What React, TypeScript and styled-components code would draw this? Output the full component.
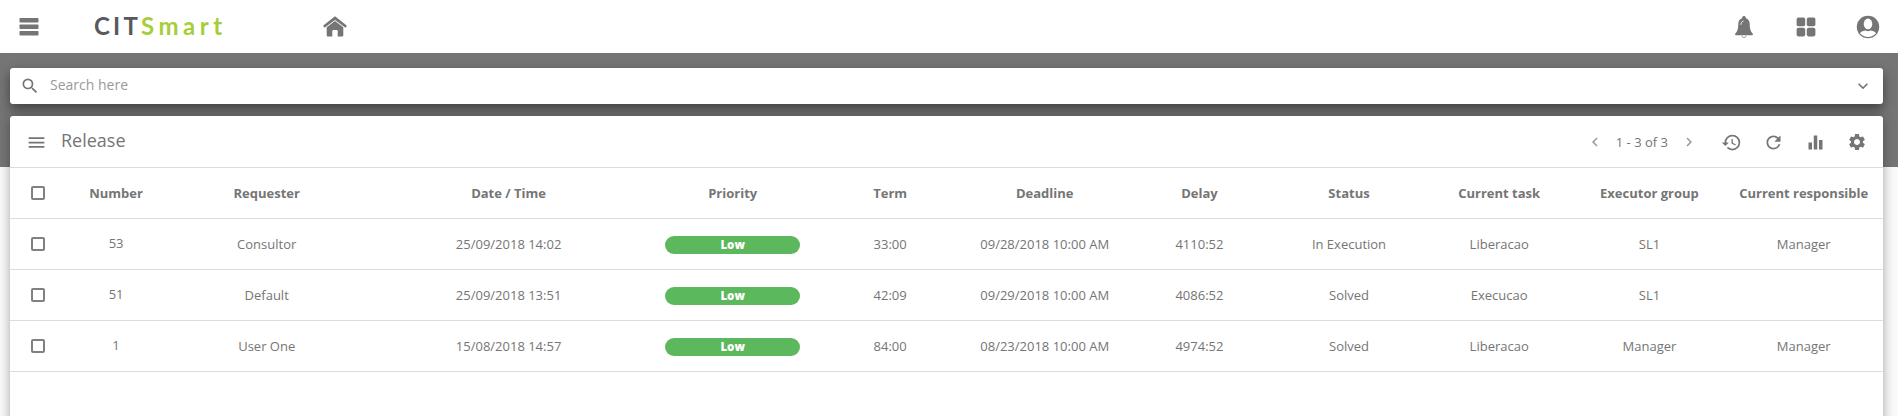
import React from "react";
import styled, { createGlobalStyle } from "styled-components";
import {
  MdChevronLeft,
  MdChevronRight,
  MdEqualizer,
  MdExpandMore,
  MdHistory,
  MdMenu,
  MdRefresh,
  MdSearch,
  MdSettings,
} from "react-icons/md";

const GlobalStyle = createGlobalStyle`
  * { box-sizing: border-box; }
  body {
    margin: 0;
    background: #fafafa;
    color: #757575;
    font-family: "Open Sans", "Noto Sans", sans-serif;
    font-size: 13px;
  }
  svg { display: block; flex: none; }
`;

const Page = styled.div`
  height: 416px;
  overflow: hidden;
  background: linear-gradient(#757575 167px, #fafafa 167px);
`;

const TopBar = styled.header`
  display: flex;
  align-items: center;
  height: 53px;
  padding: 0 18px 0 19px;
  background: #fff;
`;

const Logo = styled.div`
  width: 229px;
  margin-left: 55px;
  padding-bottom: 1px;
  color: #58595b;
  font-family: Lato, sans-serif;
  font-size: 24px;
  font-weight: 700;
  line-height: 30px;
  letter-spacing: 3.2px;
  white-space: nowrap;
`;

const LogoAccent = styled.span`
  color: #a6ce39;
  letter-spacing: 4.5px;
`;

const TopActions = styled.div`
  display: flex;
  align-items: center;
  gap: 38px;
  margin-left: auto;
`;

const TopAction = styled.div`
  display: flex;
  justify-content: center;
  width: 24px;
`;

const SearchBar = styled.div`
  display: flex;
  align-items: center;
  height: 36px;
  margin: 15px 15px 12px 10px;
  padding: 0 10px;
  border-radius: 3px;
  background: #fff;
  box-shadow: 0 5px 12px rgba(0, 0, 0, 0.45);
`;

const SearchText = styled.span`
  flex: 1;
  margin-left: 10px;
  padding-bottom: 3px;
  color: #999;
  font-size: 14px;
`;

const Panel = styled.main`
  height: 340px;
  margin: 0 15px 0 10px;
  border-radius: 3px 3px 0 0;
  background: #fff;
  box-shadow: 0 2px 12px rgba(0, 0, 0, 0.35);
`;

const Toolbar = styled.div`
  display: flex;
  align-items: center;
  height: 52px;
  padding: 1px 16px 0;
  border-bottom: 1px solid #dcdcdc;
`;

const Title = styled.h1`
  flex: 1;
  margin: 0 0 4px 14px;
  font-size: 18px;
  font-weight: 400;
`;

const Pager = styled.div`
  display: flex;
  align-items: center;
  gap: 12px;
  margin-right: 23px;
`;

const PageCount = styled.span`
  padding-bottom: 1px;
`;

const ToolIcons = styled.div`
  display: flex;
  align-items: center;
  gap: 21px;
`;

const Row = styled.div`
  display: grid;
  grid-template-columns:
    56.4px 99.4px 201.8px 282px 166.2px 148.8px 160.3px 149.2px
    149.9px 150.5px 150px 158.5px;
  align-items: center;
  height: 51px;
  border-bottom: 1px solid #dcdcdc;
`;

const Cell = styled.div<{ $raised?: boolean }>`
  padding-bottom: ${(p) => (p.$raised ? "2px" : "0")};
  line-height: 18px;
  text-align: center;
  white-space: nowrap;
`;

const HeadCell = styled(Cell)`
  font-weight: 700;
`;

const Checkbox = styled.div`
  width: 14px;
  height: 14px;
  margin-left: 21px;
  border: 2px solid #808080;
  border-radius: 2px;
`;

const Badge = styled.span`
  display: block;
  width: 135px;
  height: 18px;
  margin: 2px auto 0;
  border-radius: 9px;
  background: #5cb85c;
  color: #fff;
  font-size: 11.5px;
  font-weight: 800;
  line-height: 18px;
`;

const BarsIcon = () => (
  <svg width="20" height="18" viewBox="0 0 20 18" fill="#757575">
    <rect x="0.5" y="0" width="19" height="4.6" rx="0.8" />
    <rect x="0.5" y="6.5" width="19" height="4.6" rx="0.8" />
    <rect x="0.5" y="13" width="19" height="4.6" rx="0.8" />
  </svg>
);

const HomeIcon = () => (
  <svg width="24" height="21" viewBox="0 0 24 21" fill="#757575">
    <path d="M12 0.3 0.6 9.3a.8.8 0 0 0-.1 1.1l.6.8a.8.8 0 0 0 1.1.1L12 3.9l9.8 7.4a.8.8 0 0 0 1.1-.1l.6-.8a.8.8 0 0 0-.1-1.1Z" />
    <path d="M12 4.9 3.7 11.3V19.2a1.2 1.2 0 0 0 1.2 1.2h4.4v-5.5a1 1 0 0 1 1-1h3.4a1 1 0 0 1 1 1v5.5h4.4a1.2 1.2 0 0 0 1.2-1.2v-7.9Z" />
  </svg>
);

const BellIcon = () => (
  <svg width="18" height="22" viewBox="0 0 18 22" fill="#757575">
    <path d="M9 0a1.8 1.8 0 0 0-1.8 2.3C4.500 3.100 3.300 5.400 3.300 8c0 5-1 7.500-2.700 9.200-.9.9-.5 2 .6 2h15.600c1.100 0 1.500-1.100.6-2-1.700-1.700-2.700-4.200-2.700-9.200 0-2.600-1.200-4.900-3.900-5.700A1.800 1.800 0 0 0 9 0Z" />
    <path d="M5.900 8.800c.1-2.200 1-3.300 2.600-3.700" fill="none" stroke="#fff" strokeWidth="1" />
    <path d="M7 19.700a2 2 0 0 0 4 0" fill="none" stroke="#999" strokeWidth="0.9" />
  </svg>
);

const GridIcon = () => (
  <svg width="20" height="20" viewBox="0 0 20 20" fill="#757575">
    <rect x="0.6" y="0.6" width="8.6" height="8.6" rx="1.8" />
    <rect x="10.8" y="0.6" width="8.6" height="8.6" rx="1.8" />
    <rect x="0.6" y="10.8" width="8.6" height="8.6" rx="1.8" />
    <rect x="10.8" y="10.8" width="8.6" height="8.6" rx="1.8" />
  </svg>
);

const UserIcon = () => (
  <svg width="24" height="24" viewBox="0 0 24 24">
    <circle cx="12" cy="12" r="11.2" fill="#757575" />
    <ellipse cx="12" cy="8.9" rx="4.3" ry="5.3" fill="#fff" />
    <path d="M4 18.300c1-1.900 3.700-2.300 5.800-2.700 1.400.8 3 .8 4.400 0 2.100.4 4.800.8 5.800 2.700a10.300 10.300 0 0 1-16 0Z" fill="#fff" />
  </svg>
);

const headings = [
  "Number",
  "Requester",
  "Date / Time",
  "Priority",
  "Term",
  "Deadline",
  "Delay",
  "Status",
  "Current task",
  "Executor group",
  "Current responsible",
];

const releases = [
  ["53", "Consultor", "25/09/2018 14:02", "Low", "33:00", "09/28/2018 10:00 AM", "4110:52", "In Execution", "Liberacao", "SL1", "Manager"],
  ["51", "Default", "25/09/2018 13:51", "Low", "42:09", "09/29/2018 10:00 AM", "4086:52", "Solved", "Execucao", "SL1", ""],
  ["1", "User One", "15/08/2018 14:57", "Low", "84:00", "08/23/2018 10:00 AM", "4974:52", "Solved", "Liberacao", "Manager", "Manager"],
];

export default function App() {
  return (
    <Page>
      <GlobalStyle />
      <TopBar>
        <BarsIcon />
        <Logo>
          CIT<LogoAccent>Smart</LogoAccent>
        </Logo>
        <HomeIcon />
        <TopActions>
          <TopAction>
            <BellIcon />
          </TopAction>
          <TopAction>
            <GridIcon />
          </TopAction>
          <TopAction>
            <UserIcon />
          </TopAction>
        </TopActions>
      </TopBar>
      <SearchBar>
        <MdSearch size={20} />
        <SearchText>Search here</SearchText>
        <MdExpandMore size={20} />
      </SearchBar>
      <Panel>
        <Toolbar>
          <MdMenu size={21} />
          <Title>Release</Title>
          <Pager>
            <MdChevronLeft size={18} color="#999" />
            <PageCount>1 - 3 of 3</PageCount>
            <MdChevronRight size={18} color="#999" />
          </Pager>
          <ToolIcons>
            <MdHistory size={21} />
            <MdRefresh size={21} />
            <MdEqualizer size={21} />
            <MdSettings size={20} />
          </ToolIcons>
        </Toolbar>
        <Row>
          <Checkbox />
          {headings.map((heading) => (
            <HeadCell key={heading}>{heading}</HeadCell>
          ))}
        </Row>
        {releases.map((release) => (
          <Row key={release[0]}>
            <Checkbox />
            {release.map((value, i) => (
              <Cell key={headings[i]} $raised={i === 0}>
                {headings[i] === "Priority" ? <Badge>{value}</Badge> : value}
              </Cell>
            ))}
          </Row>
        ))}
      </Panel>
    </Page>
  );
}
